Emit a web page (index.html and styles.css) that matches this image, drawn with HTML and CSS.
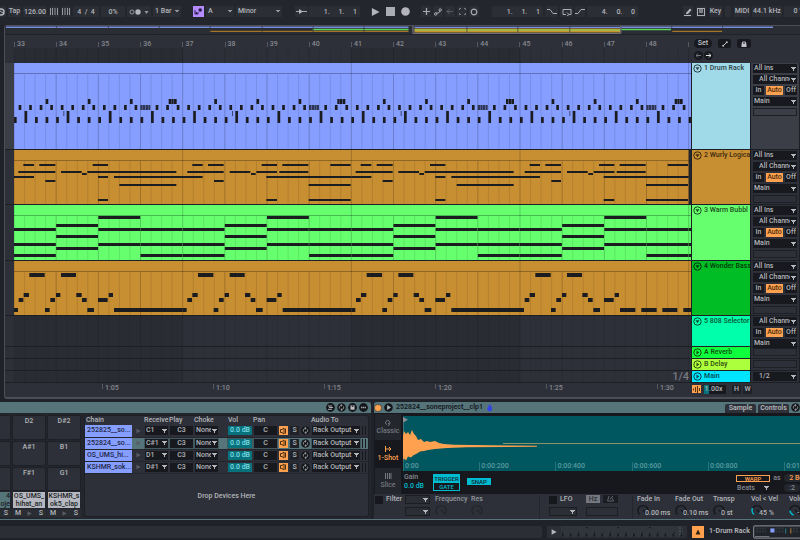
FILE: index.html
```html
<!DOCTYPE html>
<html lang="en">
<head>
<meta charset="utf-8">
<title>Arrangement</title>
<link rel="stylesheet" href="styles.css">
</head>
<body>
<svg class="defs" aria-hidden="true">
  <symbol id="fold" viewBox="0 0 9 9"><circle cx="4.500" cy="4.500" r="3.700" fill="none" stroke="currentColor"/><path d="M2.500 3.300h4L4.500 6.300z" fill="currentColor"/></symbol>
  <symbol id="unfold" viewBox="0 0 9 9"><circle cx="4.500" cy="4.500" r="3.700" fill="none" stroke="currentColor"/><path d="M3.500 2.500v4L6.300 4.500z" fill="currentColor"/></symbol>
  <symbol id="play" viewBox="0 0 10 10"><path d="M1 0.500v9L9.500 5z" fill="currentColor"/></symbol>
  <symbol id="swap" viewBox="0 0 9 9"><circle cx="4.500" cy="4.500" r="4.300" fill="#14161a"/><path d="M2.500 5.500C1.900 3.800 3 2.300 4.700 2.300M6.500 3.500C7.100 5.200 6 6.700 4.300 6.700M3.800 1.200l1.400 1.100-1.200 1M5.200 7.800L3.800 6.700l1.200-1" fill="none" stroke="#a9acb3" stroke-width=".9"/></symbol>
  <symbol id="knob" viewBox="0 0 12 12"><path d="M2.500 10.200a5 5 0 1 1 7 0M6 6l3.500 3.500" fill="none" stroke="currentColor" stroke-width="1.400"/></symbol>
  <symbol id="speaker" viewBox="0 0 9 8"><path d="M1.500 2.500h1.500l2-1.500v6L3 5.500H1.500z" fill="none" stroke="#4d2e0c"/><path d="M6.500 1.500v5" stroke="#4d2e0c"/></symbol>
</svg>

<header class="toolbar">
  <button class="cell w-link" aria-label="Link"><svg width="6" height="8" viewBox="0 0 6 8"><circle cx="1" cy="4" r="3" fill="none" stroke="#b3b5ba" stroke-width="1.500"/><path d="M0 3l3 2" stroke="#b3b5ba"/></svg></button>
  <button class="cell w-14">Tap</button>
  <input class="cell w-24" aria-label="Tempo" value="126.00">
  <button class="cell w-10" aria-label="Nudge down"><svg width="8" height="7"><path d="M.5 0v7M2.500 0v7M5 0v7M7.500 0v7" stroke="#93969d"/></svg></button>
  <button class="cell w-10" aria-label="Nudge up"><svg width="8" height="7"><path d="M.5 0v7M3 0v7M5.500 0v7M7.500 0v7" stroke="#93969d"/></svg></button>
  <input class="cell w-26" aria-label="Time signature" value="4  /  4">
  <input class="cell w-24" aria-label="Groove" value="0%">
  <button class="cell w-24" aria-label="Metronome"><svg width="20" height="8"><circle cx="3" cy="4" r="2" fill="none" stroke="#93969d"/><circle cx="9" cy="4" r="2.700" fill="#b3b5ba"/><path d="M15.500 3h4l-2 3z" fill="#93969d"/></svg></button>
  <select class="cell w-28 pick" aria-label="Quantization"><option>1 Bar</option></select>
  <button class="cell w-11 scale" aria-label="Scale"><svg width="9" height="9"><path d="M1 3v4h1.500V5M4 5v2H2.500" stroke="#2b1b4b" fill="none"/><circle cx="6.200" cy="3" r="1.800" fill="#2b1b4b"/></svg></button>
  <select class="cell w-28 pick" aria-label="Root"><option>A</option></select>
  <select class="cell w-46 pick" aria-label="Scale name"><option>Minor</option></select>
  <button class="cell w-14 follow" aria-label="Follow"><svg width="11" height="7"><path d="M0 3.500h11" stroke="#a3a5ab"/><path d="M3 1v5l4-2.500z" fill="#b3b5ba"/></svg></button>
  <input class="cell w-52 position" aria-label="Position" value="1.     1.     1">
  <button class="bare play" aria-label="Play"><svg width="9" height="10"><use href="#play"/></svg></button>
  <button class="bare" aria-label="Stop"><svg width="9" height="9"><rect width="9" height="9" fill="#a9acb3"/></svg></button>
  <button class="bare" aria-label="Record"><svg width="9" height="9"><circle cx="4.500" cy="4.500" r="4.300" fill="#b3b5ba"/></svg></button>
  <button class="cell w-11 overdub" aria-label="Overdub"><svg width="7" height="7"><path d="M3.500 0v7M0 3.500h7" stroke="#a9acb3" stroke-width="1.200"/></svg></button>
  <button class="cell w-11" aria-label="Automation arm"><svg width="8" height="8"><circle cx="1.700" cy="6" r="1.200" fill="none" stroke="#a9acb3"/><circle cx="6.200" cy="2" r="1.200" fill="none" stroke="#a9acb3"/><path d="M2 5h2.500L6 3" fill="none" stroke="#a9acb3"/></svg></button>
  <button class="cell w-11" aria-label="Re-enable automation"><svg width="8" height="7"><path d="M1 3.500h6M3.500 1L1 3.500 3.500 6" fill="none" stroke="#595c64"/></svg></button>
  <button class="cell w-11" aria-label="Capture"><svg width="7" height="7"><path d="M.5 2V.5H2M5 .5h1.500V2M6.500 5v1.500H5M2 6.500H.5V5" fill="none" stroke="#777a81"/></svg></button>
  <button class="cell w-11" aria-label="Session record"><svg width="8" height="8"><circle cx="4" cy="4" r="2.800" fill="none" stroke="#a9acb3" stroke-width="1.200"/></svg></button>
  <input class="cell w-52 loop-start" aria-label="Loop start" value="1.     1.     1">
  <button class="cell w-14" aria-label="Punch in"><svg width="10" height="7"><path d="M0 1.500h3l3 4h4" fill="none" stroke="#a9acb3"/></svg></button>
  <button class="cell w-14" aria-label="Loop"><svg width="10" height="8"><path d="M4 6.500H1v-5h8v5H7M5 4.500l2 2-2 1.500" fill="none" stroke="#a9acb3"/></svg></button>
  <button class="cell w-11" aria-label="Punch out"><svg width="10" height="7"><path d="M0 5.500h3l3-4h4" fill="none" stroke="#a9acb3"/></svg></button>
  <input class="cell w-52" aria-label="Loop length" value="4.     0.     0">
  <button class="cell w-11 draw" aria-label="Draw mode"><svg width="9" height="9"><path d="M2 6l4-4.500 1.500 1.500L4 7H2z" fill="#b3b5ba"/><path d="M0 8.500h7" stroke="#b3b5ba"/></svg></button>
  <button class="cell w-11" aria-label="Computer keyboard"><svg width="8" height="8"><rect x=".5" y=".5" width="7" height="7" fill="none" stroke="#a9acb3"/><path d="M3 0v5M5 0v5" stroke="#a9acb3" stroke-width="1.300"/></svg></button>
  <button class="cell w-14">Key</button>
  <span class="cell w-6"></span>
  <button class="cell w-17">MIDI</button>
  <button class="cell w-30">44.1 kHz</button>
  <span class="cell load">0 %</span>
</header>

<main class="arrangement">
  <svg class="overview" viewBox="0 0 796 9" preserveAspectRatio="none">
    <path d="M1 1.500h403M617 1.500h152" stroke="#768cdd" stroke-width="1.600"/>
    <path d="M205 6h199M668 6h50" stroke="#a47427" stroke-width="1.500"/>
    <path d="M308 4h96M617 4h50" stroke="#5bd65a" stroke-width="1.600"/>
    <path d="M410 1.500h206" stroke="#768cdd" stroke-width="1.500"/>
    <path d="M410 5h206" stroke="#c79135" stroke-width="4.600"/>
    <path d="M410 4.500h206" stroke="#7adf4c" stroke-width="1.200"/>
    <path d="M51.500 0v7M103.500 0v7M154.500 0v7M205.500 0v7M257.500 0v7M308.500 0v7M359.500 0v7M462.500 0v7M513.500 0v7M565.500 0v7M667.500 0v7M718.500 0v7" stroke="#2d3038" stroke-width=".7"/>
    <path d="M408.500 0v7q0 1.500 1.500 1.500h205q1.500 0 1.500-1.500V0" fill="none" stroke="#6d7078" stroke-width="1.300"/>
  </svg>

  <div class="ruler">
    <div class="bars">
      <span>33</span><span>34</span><span>35</span><span>36</span><span>37</span><span>38</span><span>39</span><span>40</span><span>41</span><span>42</span><span>43</span><span>44</span><span>45</span><span>46</span><span>47</span><span>48</span><span></span>
      <svg class="grid" data-lane="ruler"></svg>
    </div>
    <div class="locators">
      <button class="pill set">Set</button>
      <button class="pill" aria-label="Automation mode"><svg width="6" height="6"><path d="M1 5l4-4" stroke="#c0c2c7"/><circle cx="1.200" cy="4.800" r="1" fill="#c0c2c7"/><circle cx="4.800" cy="1.200" r="1" fill="#c0c2c7"/></svg></button>
      <button class="pill" aria-label="Lock envelopes"><svg width="6" height="6"><rect x=".5" y="2.500" width="5" height="3.500" fill="#c0c2c7"/><path d="M1.500 3V1h3v2" fill="none" stroke="#c0c2c7"/></svg></button>
      <span class="jump">
        <button class="pill dot" aria-label="Previous locator"><svg width="5" height="5"><path d="M0 2.500h5M2 .5l-2 2 2 2" fill="none" stroke="#74777e"/></svg></button>
        <button class="pill dot" aria-label="Next locator"><svg width="5" height="5"><path d="M0 2.500h5M3 .5l2 2-2 2" fill="none" stroke="#e0e1e4"/></svg></button>
      </span>
    </div>
  </div>

  <section class="track t-drum">
    <svg class="lane" data-lane="drum"></svg>
    <div class="name"><svg width="9" height="9"><use href="#fold"/></svg>1 Drum Rack</div>
    <div class="io selected">
      <select class="pick" aria-label="Input"><option>All Ins</option></select>
      <select class="pick channel" aria-label="Channel"><option>All Channels</option></select>
      <div class="monitor"><button>In</button><button class="on">Auto</button><button>Off</button></div>
      <select class="pick" aria-label="Output"><option>Main</option></select>
      <span class="blank"></span>
    </div>
  </section>
  <section class="track t-wurly">
    <svg class="lane" data-lane="wurly"></svg>
    <div class="name"><svg width="9" height="9"><use href="#fold"/></svg>2 Wurly Logica</div>
    <div class="io">
      <select class="pick" aria-label="Input"><option>All Ins</option></select>
      <select class="pick channel" aria-label="Channel"><option>All Channels</option></select>
      <div class="monitor"><button>In</button><button class="on">Auto</button><button>Off</button></div>
      <select class="pick" aria-label="Output"><option>Main</option></select>
      <span class="blank"></span>
    </div>
  </section>
  <section class="track t-warm">
    <svg class="lane" data-lane="warm"></svg>
    <div class="name"><svg width="9" height="9"><use href="#fold"/></svg>3 Warm Bubbl</div>
    <div class="io">
      <select class="pick" aria-label="Input"><option>All Ins</option></select>
      <select class="pick channel" aria-label="Channel"><option>All Channels</option></select>
      <div class="monitor"><button>In</button><button class="on">Auto</button><button>Off</button></div>
      <select class="pick" aria-label="Output"><option>Main</option></select>
      <span class="blank"></span>
    </div>
  </section>
  <section class="track t-bass">
    <svg class="lane" data-lane="bass"></svg>
    <div class="name"><svg width="9" height="9"><use href="#fold"/></svg>4 Wonder Bass</div>
    <div class="io">
      <select class="pick" aria-label="Input"><option>All Ins</option></select>
      <select class="pick channel" aria-label="Channel"><option>All Channels</option></select>
      <div class="monitor"><button>In</button><button class="on">Auto</button><button>Off</button></div>
      <select class="pick" aria-label="Output"><option>Main</option></select>
      <span class="blank"></span>
    </div>
  </section>
  <section class="track t-selector">
    <svg class="lane" data-lane="empty"></svg>
    <div class="name"><svg width="9" height="9"><use href="#fold"/></svg>5 808 Selector</div>
    <div class="io">
      <select class="pick channel" aria-label="Channel"><option>All Channels</option></select>
      <div class="monitor"><button>In</button><button class="on">Auto</button><button>Off</button></div>
      <select class="pick" aria-label="Output"><option>Main</option></select>
    </div>
  </section>
  <section class="track t-reverb">
    <svg class="lane" data-lane="empty"></svg>
    <div class="name"><svg width="9" height="9"><use href="#unfold"/></svg>A Reverb</div>
    <div class="io"><span class="blank"></span></div>
  </section>
  <section class="track t-delay">
    <svg class="lane" data-lane="empty"></svg>
    <div class="name"><svg width="9" height="9"><use href="#unfold"/></svg>B Delay</div>
    <div class="io"><span class="blank"></span></div>
  </section>
  <section class="track t-main">
    <div class="lane-wrap"><svg class="lane" data-lane="empty"></svg><span class="snap-size">1/4</span></div>
    <div class="name"><svg width="9" height="9"><use href="#unfold"/></svg>Main</div>
    <div class="io"><select class="pick channel" aria-label="Cue output"><option>1/2</option></select></div>
  </section>

  <div class="times">
    <div class="clock"><span></span><span>1:05</span><span>1:10</span><span>1:15</span><span>1:20</span><span>1:25</span><span>1:30</span></div>
    <div class="zoomer">
      <button class="wave-btn" aria-label="Waveform zoom"><svg width="8" height="7"><path d="M.5 2.500v2M2.500 1v5M4.500 0v7M6.500 2v3" stroke="#5c3309"/></svg></button>
      <span class="rate"><b>1</b>.00x</span>
      <button class="small">H</button><button class="small">W</button>
    </div>
  </div>
</main>

<div class="devices">
  <section class="rack">
    <div class="titlebar rack-title">
      <svg width="9" height="9"><circle cx="4.500" cy="4.500" r="4.400" fill="#14161a"/><path d="M2 3h4M3 4.500h4M2 6.300h4" stroke="#a9acb3"/></svg>
      <svg width="9" height="9"><use href="#swap"/></svg>
      <svg width="9" height="9"><circle cx="4.500" cy="4.500" r="4.400" fill="#14161a"/><path d="M2.500 2.300h4v4.400h-4z" fill="#c0c2c7"/><path d="M3.700 2.500h1.700v1.300H3.700z" fill="#14161a"/></svg>
      <svg width="9" height="9"><circle cx="4.500" cy="4.500" r="4.400" fill="#14161a"/><path d="M2 4.500h5" stroke="#a9acb3" stroke-width="1.300" stroke-dasharray="1.300 .5"/></svg>
    </div>
    <div class="rack-body">
      <div class="pads">
        <button class="pad edge" aria-label="Pad"></button><button class="pad">D2</button><button class="pad">D#2</button>
        <button class="pad edge" aria-label="Pad"></button><button class="pad">A#1</button><button class="pad">B1</button>
        <button class="pad edge" aria-label="Pad"></button><button class="pad">F#1</button><button class="pad">G1</button>
        <div class="pad-name current"><span>4</span><span>oje</span></div><div class="pad-name"><span>OS_UMS_</span><span>hihat_an</span></div><div class="pad-name"><span>KSHMR_s</span><span>ok5_clap</span></div>
        <div class="ms last"><button>S</button></div>
        <div class="ms"><button>M</button><svg width="5" height="5"><use href="#play"/></svg><button>S</button></div>
        <div class="ms"><button>M</button><svg width="5" height="5"><use href="#play"/></svg><button>S</button></div>
      </div>
      <div class="chain-box">
        <table class="chains">
          <colgroup><col class="c-name"><col class="c-aud"><col class="c-key"><col class="c-key"><col class="c-choke"><col class="c-vol"><col class="c-key"><col class="c-icon"><col class="c-icon"><col class="c-icon"><col class="c-out"><col></colgroup>
          <thead><tr><th>Chain</th><th></th><th>Receive</th><th>Play</th><th>Choke</th><th class="vol-head">Vol</th><th>Pan</th><th></th><th></th><th></th><th>Audio To</th><th></th></tr></thead>
          <tbody>
            <tr><td class="chain">252825__so...</td><td><svg width="5" height="6"><use href="#play"/></svg></td><td><select class="pick" aria-label="Receive"><option>C1</option></select></td><td><input aria-label="Play" value="C3"></td><td><select class="pick" aria-label="Choke"><option>None</option></select></td><td class="vol"><input aria-label="Volume" value="0.0 dB"></td><td><input aria-label="Pan" value="C"></td><td><button class="act" aria-label="Activator"><svg width="9" height="8"><use href="#speaker"/></svg></button></td><td><button class="solo">S</button></td><td><svg width="9" height="9"><use href="#swap"/></svg></td><td><select class="pick" aria-label="Audio to"><option>Rack Output</option></select></td><td><span class="meter"></span></td></tr>
            <tr class="picked"><td class="chain">252824__so...</td><td><svg width="5" height="6"><use href="#play"/></svg></td><td><select class="pick" aria-label="Receive"><option>C#1</option></select></td><td><input aria-label="Play" value="C3"></td><td><select class="pick" aria-label="Choke"><option>None</option></select></td><td class="vol"><input aria-label="Volume" value="0.0 dB"></td><td><input aria-label="Pan" value="C"></td><td><button class="act" aria-label="Activator"><svg width="9" height="8"><use href="#speaker"/></svg></button></td><td><button class="solo">S</button></td><td><svg width="9" height="9"><use href="#swap"/></svg></td><td><select class="pick" aria-label="Audio to"><option>Rack Output</option></select></td><td><span class="meter"></span></td></tr>
            <tr><td class="chain">OS_UMS_hi...</td><td><svg width="5" height="6"><use href="#play"/></svg></td><td><select class="pick" aria-label="Receive"><option>D1</option></select></td><td><input aria-label="Play" value="C3"></td><td><select class="pick" aria-label="Choke"><option>None</option></select></td><td class="vol"><input aria-label="Volume" value="0.0 dB"></td><td><input aria-label="Pan" value="C"></td><td><button class="act" aria-label="Activator"><svg width="9" height="8"><use href="#speaker"/></svg></button></td><td><button class="solo">S</button></td><td><svg width="9" height="9"><use href="#swap"/></svg></td><td><select class="pick" aria-label="Audio to"><option>Rack Output</option></select></td><td><span class="meter"></span></td></tr>
            <tr><td class="chain">KSHMR_sok...</td><td><svg width="5" height="6"><use href="#play"/></svg></td><td><select class="pick" aria-label="Receive"><option>D#1</option></select></td><td><input aria-label="Play" value="C3"></td><td><select class="pick" aria-label="Choke"><option>None</option></select></td><td class="vol"><input aria-label="Volume" value="0.0 dB"></td><td><input aria-label="Pan" value="C"></td><td><button class="act" aria-label="Activator"><svg width="9" height="8"><use href="#speaker"/></svg></button></td><td><button class="solo">S</button></td><td><svg width="9" height="9"><use href="#swap"/></svg></td><td><select class="pick" aria-label="Audio to"><option>Rack Output</option></select></td><td><span class="meter"></span></td></tr>
          </tbody>
        </table>
        <p class="drop">Drop Devices Here</p>
      </div>
    </div>
  </section>

  <section class="sampler">
    <div class="titlebar sampler-title">
      <svg width="8" height="8"><circle cx="4" cy="4" r="3.600" fill="#ffa14f" stroke="#30333a" stroke-width=".6"/></svg>
      <svg width="9" height="9"><circle cx="4.500" cy="4.500" r="4.300" fill="#14161a"/><path d="M3.200 2v5l3.800-2.500z" fill="#a9bdc0"/></svg>
      <h2>252824__soneproject__clp1</h2>
      <svg width="7" height="8"><path d="M1 3.500L2.300 4V1h1v2.500L3.800.5h1v3L6 2v3.500Q5.500 7.500 3.500 7.500 1.500 7 1 3.500z" fill="#3440e8"/></svg>
      <span class="grow"></span>
      <button class="tab">Sample</button><button class="tab">Controls</button>
      <svg width="9" height="9"><use href="#swap"/></svg>
    </div>
    <div class="sampler-body">
      <div class="modes">
        <button><svg width="8" height="8"><path d="M3 6.500H2.500a2.200 2.200 0 1 1 2.500 0M4 5l1.500 1.500L4 8" fill="none" stroke="currentColor"/></svg>Classic</button>
        <button class="on"><svg width="8" height="8"><path d="M1.500 1v6M2 4h5M5 2l2 2-2 2" fill="none" stroke="currentColor"/></svg>1-Shot</button>
        <button><svg width="8" height="8"><path d="M1.500 1v6M3.500 1v6M5.500 1v6M7 1v6" stroke="currentColor"/></svg>Slice</button>
      </div>
      <div class="sample">
        <div class="display">
          <svg class="wave" viewBox="0 0 397 46" preserveAspectRatio="none">
            <path d="M100 27.500h297" stroke="#8c9168"/>
            <path d="M0 1v45" stroke="#738f94"/><path d="M0 1l5 2.700L0 6.500z" fill="#8a8d96"/>
            <path d="M1 15l2 3 2-2 2 3 2-5 2 4 2 2 2 4 3-1 3 3 3-1 3 1 5-1 4 2 5 1 10 .7 20 .3 40 .5 23 .2v1l-30 .3-40 .3-20 .7-12 1-7 1-4 1-4 .6-3 2-4 2-2 2-3-1-2 4-2-2-3 3-3-2-2 7z" fill="#ffa14f"/>
          </svg>
          <div class="sample-ruler"><span>0:00</span><span>0:00:200</span><span>0:00:400</span><span>0:00:600</span><span>0:00:800</span><span>0:01</span></div>
        </div>
        <div class="playback">
          <label class="gain">Gain<input value="0.0 dB"></label>
          <div class="trig"><button class="on">TRIGGER</button><button>GATE</button></div>
          <button class="snap">SNAP</button>
          <span class="grow"></span>
          <div class="warp">
            <div><button class="warp-btn">WARP</button><span class="as">as</span><button class="beats">2 Beats</button></div>
            <div><select class="pick warp-mode" aria-label="Warp mode"><option>Beats</option></select><button class="half">:2</button></div>
          </div>
        </div>
      </div>
    </div>
    <div class="params">
      <label class="check filter-on"><input type="checkbox">Filter</label>
      <div class="filter"><select class="pick" aria-label="Filter type"></select><select class="pick" aria-label="Filter slope"></select></div>
      <div class="param dim freq"><span>Frequency</span><svg width="12" height="12"><use href="#knob"/></svg></div>
      <div class="param dim res"><span>Res</span><svg width="12" height="12"><use href="#knob"/></svg></div>
      <div class="lfo">
        <label class="check"><input type="checkbox">LFO</label><button class="hz">Hz</button><button class="sync" aria-label="Sync"><svg width="7" height="7"><path d="M2 1L.5 6h6L5 3M3 4l3-3" fill="none" stroke="#61646b"/></svg></button>
        <select class="pick" aria-label="LFO shape"></select><span class="blank"></span>
      </div>
      <div class="param"><span>Fade In</span><div><svg width="12" height="12"><use href="#knob"/></svg><output>0.00 ms</output></div></div>
      <div class="param"><span>Fade Out</span><div><svg width="12" height="12"><use href="#knob"/></svg><output>0.10 ms</output></div></div>
      <div class="param"><span>Transp</span><div><svg width="12" height="12"><use href="#knob"/></svg><output>0 st</output></div></div>
      <div class="param"><span>Vol &lt; Vel</span><div><svg width="12" height="12"><use href="#knob"/><path d="M1.500 4Q0 8 3 10.500" fill="none" stroke="#00bcd0" stroke-width="1.500"/></svg><output>45 %</output></div></div>
      <div class="param"><span>Volume</span><div><svg width="12" height="12"><use href="#knob"/><path d="M1 6.500Q1 9.500 4.500 11" fill="none" stroke="#00bcd0" stroke-width="1.500"/></svg><output>-12 dB</output></div></div>
    </div>
  </section>
</div>

<footer class="status">
  <div class="info"></div>
  <div class="mini"><svg width="6" height="6"><use href="#play"/></svg>
    <svg class="mini-clip" viewBox="0 0 122 11" preserveAspectRatio="none"><path d="M1 9h120" stroke="#15171b" stroke-width="3" stroke-dasharray="1.500 6.400"/><path d="M1 6.500h120" stroke="#15171b" stroke-dasharray="1 15"/><path d="M25 1.500h90" stroke="#15171b" stroke-dasharray="1.500 30"/><path d="M119 1v9" stroke="#4a5a60" stroke-dasharray="2 1"/></svg>
  </div>
  <button class="detail" aria-label="Device view"><svg width="8" height="8"><path d="M4 1.500l2.500 5h-5z" fill="#30200c"/></svg></button>
  <span class="current-track">1-Drum Rack</span>
  <svg class="device-map" viewBox="0 0 46 13"><path d="M48 .6H2Q.6.6.6 2v9Q.6 12.400 2 12.400h46" fill="#20232a" stroke="#7b7e85" stroke-width="1.200"/><path d="M3 3h10M3 6h10M22 3h8M22 6h8M36 3h8M36 6h8" stroke="#30383f" stroke-width="2" stroke-dasharray="2 1"/><rect x="17" y="3" width="4" height="4" fill="#859eff"/><path d="M2 11h14" stroke="#7b7e85"/><path d="M32 3v5" stroke="#2a7f87"/><path d="M37 3v5" stroke="#a47427"/></svg>
</footer>
<script src="lanes.js"></script>
</body>
</html>
```
FILE: styles.css
```css
* { box-sizing: border-box; }
body {
  margin: 0;
  min-height: 100vh;
  overflow: hidden;
  background: #1f2228;
  color: #b3b5ba;
  font: 500 7px/9px Roboto, "Liberation Sans", sans-serif;
  white-space: nowrap;
}
button, input, select {
  appearance: none;
  margin: 0;
  padding: 0;
  border: 0;
  border-radius: 0;
  min-width: 0;
  background: none;
  color: inherit;
  font: inherit;
  line-height: 9px;
}
svg { flex: none; display: block; }
.defs { width: 0; height: 0; position: absolute; }
.grow { flex: 1; }
.pick {
  display: block;
  width: 100%;
  height: 9px;
  padding: 0 7px 0 1px;
  overflow: hidden;
  background: #17191e conic-gradient(from -32deg at 50% 100%, #b3b5ba 64deg, transparent 0) no-repeat right 1px center / 5px 4px;
}
.blank { display: block; height: 8px; border: 1px solid #1c1f24; }

/* transport */
.toolbar { display: flex; align-items: center; gap: 2px; height: 25px; padding-bottom: 2px; background: #23262d; overflow: hidden; }
.cell { flex: none; display: flex; align-items: center; justify-content: center; height: 11px; background: #2b2e35; text-align: center; white-space: pre; }
.cell.pick { padding-left: 2px; text-align: left; line-height: 11px; background: #2b2e35 conic-gradient(from -32deg at 50% 100%, #93969d 64deg, transparent 0) no-repeat right 2px center / 4px 3px; }
.w-link { width: 6px; justify-content: flex-start; }
.w-6 { width: 6px; }
.w-10 { width: 10px; }
.w-11 { width: 10px; }
.w-14 { width: 13px; }
.w-17 { width: 16px; }
.w-24 { width: 24px; }
.w-26 { width: 26px; }
.w-28 { width: 28px; }
.w-30 { width: 30px; }
.load { width: 26px; padding-left: 4px; }
.w-46 { width: 46px; }
.w-52 { width: 51px; padding-right: 3px; text-align: right; }
.scale { width: 11px; margin-left: 10px; background: #b48cff; }
.follow { margin-left: 11px; }
.position { margin-left: -1px; }
.bare { flex: none; color: #b3b5ba; margin-right: 4px; }
.play { margin-left: 9px; }
.overdub { margin-left: 5px; }
.loop-start { margin-left: 11px; }
.draw { margin-left: 43px; }
.draw ~ .cell { margin-left: 1px; }
.draw ~ .w-30, .draw ~ .load { margin-left: 0; }

/* arrangement */
.arrangement { margin-left: 4px; padding-bottom: 2px; border: solid #4b4e56; border-width: 1px 0 2px 1px; border-radius: 3px 0 0 3px; background: #2d3038; }
.overview { width: 100%; height: 9px; background: #2a2d34; border-bottom: 1px solid #1f2228; }
.ruler { display: flex; height: 28px; }
.bars { position: relative; flex: 1; display: grid; grid-template-columns: repeat(16, 42fr) 3fr; grid-template-rows: 13px 15px; margin-left: 9px; color: #85888f; }
.bars span { margin-top: 7px; height: 5px; padding-left: 2px; border-left: 1px solid #55585f; line-height: 5px; }
.grid { grid-column: 1 / -1; width: 100%; height: 15px; }
.locators { width: 109px; display: grid; grid-template-columns: 18px 13px 14px; grid-template-rows: 9px 9px; column-gap: 6px; row-gap: 2px; padding: 4px 0 0 3px; }
.pill { display: flex; align-items: center; justify-content: center; height: 9px; border-radius: 2px; background: #17191e; color: #c0c2c7; }
.pill.set { border-radius: 5px; }
.jump { display: flex; gap: 1px; padding-top: 1px; }
.dot { width: 9px; border-radius: 5px; flex: none; }
.track { display: flex; border-bottom: 1px solid #1c1f24; }
.lane, .lane-wrap { flex: 1; min-width: 0; height: 100%; }
.track > .lane, .lane-wrap { height: auto; align-self: stretch; margin-left: 9px; }
.lane-wrap { position: relative; display: flex; align-items: center; justify-content: flex-end; }
.lane-wrap .lane { position: absolute; inset: 0; width: 100%; }
.snap-size { position: relative; padding-right: 2px; color: #777a81; font-size: 11px; line-height: 11px; }
.name { width: 59px; display: flex; align-items: flex-start; gap: 2px; padding: 1px 0 0 1px; border-left: 1px solid #1c1f24; overflow: hidden; color: rgb(0 0 0 / 70%); font-weight: 600; }
.io { width: 50px; display: flex; flex-direction: column; gap: 2px; padding: 1px 2px 0 2px; border-left: 1px solid #17191e; border-right: 1px solid #1c1f24; }
.io.selected { background: #3b3e46; }
.channel { padding-left: 6px; }
.monitor { display: grid; grid-template-columns: 11px 17px 12px; gap: 2px; }
.monitor button { background: #17191e; }
.monitor .on { background: #ffa14f; color: #4d2e0c; }
.t-drum { height: 87px; background: #3b3e46; }
.t-wurly, .t-warm, .t-bass { height: 55px; }
.t-warm { height: 56px; }
.t-selector { height: 31px; }
.t-reverb, .t-delay, .t-main { height: 12px; }
.t-drum .name { background: #a0d9e8; }
.t-wurly .name { background: #c88e32; }
.t-warm .name { background: #66ff6e; }
.t-bass .name { background: #00bd25; }
.t-selector .name { background: #00ffab; }
.t-reverb .name { background: #10ff3c; }
.t-delay .name { background: #acff3c; }
.t-main .name { background: #00e5ff; }
.times { display: flex; height: 12px; }
.clock { flex: 1; display: grid; grid-template-columns: 88fr repeat(5, 111fr) 34fr; margin-left: 9px; color: #85888f; }
.clock span { height: 5px; margin-top: 1px; padding-left: 2px; border-left: 1px solid #55585f; line-height: 9px; }
.clock span:first-child { border: 0; }
.zoomer { width: 109px; display: flex; align-items: flex-start; gap: 2px; padding: 2px 0 0 1px; }
.wave-btn { display: flex; align-items: center; justify-content: center; width: 9px; height: 8px; background: #ffa14f; }
.rate { width: 22px; margin: 0 4px 0 1px; background: #17191e; }
.rate b { display: inline-block; width: 5px; background: #08727c; font-weight: 500; text-align: center; }
.small { width: 9px; background: #1f2228; }

/* devices */
.devices { display: flex; margin-top: 3px; height: 118px; border-bottom: 1px solid #56757a; }
.titlebar { display: flex; align-items: center; height: 11px; background: #56757a; color: #14161a; }
.rack { flex: none; width: 371px; background: #2d3038; display: flex; flex-direction: column; }
.rack-title { justify-content: flex-end; gap: 2px; padding-right: 3px; border-radius: 0 3px 0 0; }
.rack-body { display: flex; flex: 1; padding: 2px 3px 2px 0; background: #23262d; }
.pads { width: 81px; display: grid; grid-template-columns: 11px 34px 34px; grid-template-rows: 25px 25px 24px 16px 8px; gap: 1px; }
.pad { display: flex; justify-content: center; padding-top: 1px; border: 1px solid #1d2026; border-radius: 2px; background: #2d3038; }
.pad.edge { border-left: 0; border-radius: 0 2px 2px 0; }
.pad-name { display: flex; flex-direction: column; align-items: center; margin: 0 1px; background: #b5b8c0; color: #1c1f24; line-height: 8px; }
.pad-name.current { align-items: flex-end; margin-left: 0; background: #56757a; }
.ms { display: flex; align-items: center; justify-content: space-between; padding: 0 3px; background: #2a2d34; }
.ms.last { justify-content: flex-end; }
.ms svg { color: #595c64; }
.chain-box { flex: 1; margin-left: 3px; border: 1px solid #1d2026; border-radius: 3px; background: #2d3038; }
.chains { table-layout: fixed; width: 283px; border-collapse: collapse; }
.chains th { height: 9px; padding: 0; text-align: left; font-weight: 500; }
.chains th:first-child { padding-left: 1px; }
.chains th.vol-head { padding-left: 9px; }
.chains td { height: 12px; padding: 1px; vertical-align: middle; border-bottom: 1px solid #23262d; }
.chains td > svg { margin: 0 auto; color: #595c64; }
.chains .chain { padding: 0 2px; background: #859eff; color: #1f2645; }
.chains input { display: block; width: 100%; height: 9px; background: #17191e; text-align: center; }
.chains .vol { padding-left: 9px; }
.chains .vol input { background: #08727c; color: #7fdde6; }
.chains .act, .solo { display: block; width: 9px; height: 9px; }
.chains .act { background: #ffa14f; }
.solo { background: #1f2228; }
.picked td { background: #56757a; }
.picked input, .picked .pick { outline: 1px solid #44595e; }
.c-name { width: 47px; }
.c-aud { width: 12px; }
.c-key { width: 25px; }
.c-choke { width: 25px; }
.c-vol { width: 34px; }
.c-icon { width: 11px; }
.c-out { width: 50px; }
.meter { display: block; width: 4px; height: 9px; border: solid #17191e; border-width: 0 1px; }
.drop { margin: 18px 0 0; text-align: center; }

.sampler { flex: 1; min-width: 0; margin-left: 3px; display: flex; flex-direction: column; background: #2d3038; overflow: hidden; }
.sampler-title { gap: 2px; border-radius: 3px 0 0 0; }
.sampler-title h2 { margin: 0 1px; font: inherit; font-weight: 600; }
.tab { flex: none; align-self: flex-end; width: 31px; height: 9px; border-radius: 2px 2px 0 0; background: #2d3038; color: #b3b5ba; font-weight: 600; }
.sampler-body { display: flex; height: 81px; padding: 1px 0 0 1px; background: #16181d; }
.modes { width: 26px; display: grid; grid-template-rows: repeat(3, 1fr); gap: 1px; }
.modes button { display: flex; flex-direction: column; align-items: center; justify-content: center; gap: 1px; background: #23262d; color: #74777e; }
.modes .on { background: #16181d; color: #ffa14f; }
.sample { flex: 1; min-width: 0; padding: 2px 0 0 2px; }
.display { height: 55px; background: #00575f; display: flex; flex-direction: column; }
.wave { width: 100%; height: 46px; }
.sample-ruler { display: grid; grid-template-columns: repeat(5, 76fr) 15fr; color: #5b999f; }
.sample-ruler span { padding-left: 1px; border-left: 1px solid #2a7479; }
.playback { display: flex; padding: 2px 0 0 1px; }
.gain { width: 29px; display: flex; flex-direction: column; color: #85888f; }
.gain input { width: 28px; color: #00bcd0; }
.trig { width: 27px; height: 17px; margin-top: 1px; display: grid; grid-template-rows: 1fr 1fr; border: 1px solid #00bcd0; }
.trig button, .snap { line-height: 7px; font-size: 6px; color: #00bcd0; font-weight: 500; }
.trig .on, .snap { background: #00bcd0; color: #0c2a30; }
.snap { width: 24px; height: 7px; margin: 5px 0 0 7px; }
.warp { width: 64px; overflow: hidden; }
.warp > div { display: flex; align-items: center; height: 10px; }
.warp-btn { flex: none; width: 34px; height: 7px; border: 1px solid #ffa14f; color: #ffa14f; font-size: 6px; line-height: 5px; }
.as { flex: none; width: 14px; text-align: center; color: #85888f; }
.beats, .half { flex: none; width: 34px; height: 8px; border-radius: 4px; background: #23262d; color: #ffa14f; line-height: 8px; }
.half { width: 16px; color: #85888f; }
.warp-mode { flex: none; width: 34px; margin-right: 14px; background-color: transparent; color: #85888f; }
.params { flex: 1; display: flex; padding: 1px 0 0 1px; }
.check { display: flex; height: 9px; gap: 3px; align-items: center; }
.check input { flex: none; width: 8px; height: 8px; background: #16181d; }
.params > * { flex: none; }
.params .pick { height: 9px; border: 1px solid #1a1d22; background-color: #2b2e35; }
.filter-on { width: 27px; }
.filter { width: 25px; margin-left: 3px; display: flex; flex-direction: column; gap: 3px; }
.param { width: 38px; }
.param div { display: flex; align-items: flex-end; color: #15171b; }
.param span { display: block; }
.param svg { overflow: visible; }
.param output { margin: 0 0 -2px -4px; color: #b3b5ba; }
.param.dim span { color: #93969d; }
.param.dim svg { color: #23262d; }
.param.freq { width: 36px; margin-left: 5px; }
.param.res { width: 69px; border-right: 1px solid #23262d; }
.lfo { display: grid; width: 93px; grid-template-columns: 34px 14px 15px; grid-template-rows: 9px 9px; column-gap: 3px; row-gap: 3px; padding-left: 9px; margin-right: 4px; border-right: 1px solid #23262d; }
.lfo .pick { width: 28px; }
.lfo .hz { height: 8px; background: #74777e; color: #2d3038; line-height: 8px; }
.lfo .sync { display: flex; justify-content: center; height: 8px; background: #1a1d22; }
.lfo .blank { grid-column: span 2; height: 9px; }

.status { display: flex; align-items: center; height: 17px; margin-top: 3px; }
.info { flex: 1; height: 12px; border-radius: 0 2px 2px 0; background: #2b2e35; }
.mini { display: flex; align-items: center; gap: 4px; width: 140px; height: 12px; margin-left: 5px; padding-left: 4px; background: #2b2e35; }
.mini-clip { width: 122px; height: 11px; background: #30343b; }
.detail { display: flex; align-items: center; justify-content: center; width: 12px; height: 12px; margin: 0 5px; background: #ffa14f; }
.current-track { width: 43px; font-weight: 600; }
.device-map { width: 47px; height: 14px; margin-left: 1px; }
```
FILE: lanes.js
```js
// Lane drawings. Horizontal unit: a third of a pixel at 677px lane width; a bar is 126.5 units.
const WIDTH = 2031;
const BAR = 126.5;
const BEAT = BAR / 4;
const INK = '#1b1c20';

const rect = (x, y, w, h, fill) =>
  `<rect x="${x}" y="${y}" width="${w}" height="${h}" fill="${fill}"/>`;

function gridLines(top, height, strength) {
  let out = '';
  for (let i = 0; i * BEAT < WIDTH; i++) {
    const major = i % 4 === 0;
    out += rect(i * BEAT - 1.5, i % 16 === 0 ? 0 : top, 3, height, `rgb(0 0 0 / ${(major ? 2 : 1) * strength}%)`);
  }
  return out;
}

function shading(height) {
  return rect(0, 0, BAR * 4, height, '#292c33') + rect(BAR * 8, 0, BAR * 4, height, '#292c33');
}

// rows: [y, height, [[start, end], ...], fill] repeated every `period` units
function notes(rows, period, limit = WIDTH) {
  let out = '';
  for (let base = 0; base < limit; base += period) {
    for (const [y, h, spans, fill = INK] of rows) {
      for (const [a, b] of spans) {
        if (base + a < limit) out += rect(base + a, y, Math.min(b, limit - base) - a, h, fill);
      }
    }
  }
  return out;
}

function clip(color, height, strength = 10) {
  return rect(0, 0, WIDTH, height, color) + rect(0, 10, WIDTH, 1, 'rgb(0 0 0 / 28%)') + gridLines(11, height, strength);
}

const bars = (...list) => list.map(n => [n * BAR, (n + 1) * BAR - 1]);
const beats = (list, width) => list.map(n => [n * BEAT, n * BEAT + width]);
const all = [...Array(16).keys()];

const drum = [
  [54, 6, beats(all, 8)],
  [42, 5, beats(all.filter(n => n !== 12).map(n => n + 0.44), 8)],
  [42, 5, [[379, 386], [387, 394], [395, 402], [403, 409]], '#2f3655'],
  [48, 6, beats([1, 5, 9, 13], 8)],
  [48, 5, [[148, 151]], '#3d466f'],
  [36, 5, beats([3, 7, 11], 8).concat([[464, 471], [472, 479], [480, 488]])]
];
const wurly = [
  [14, 2, [[28, 60], [76, 124], [236, 282], [535, 566], [582, 629], [743, 789], [805, 883], [949, 1010]]],
  [21, 2, [[13, 124], [141, 203], [220, 487], [520, 629], [647, 709], [727, 789], [796, 883]]],
  [23, 2, [[204, 218], [711, 725]]],
  [26, 2, [[0, 60], [252, 282], [300, 566], [757, 1012]]],
  [30, 2, [[94, 124], [600, 629]]],
  [34, 2, [[316, 487], [884, 1010]]],
  [49, 2, [[252, 282], [757, 789], [884, 1010]]]
];
const warm = [
  [11, 3, bars(2)],
  [19, 3, bars(1)],
  [23, 3, bars(0, 2, 3)],
  [30, 3, bars(1)],
  [38, 3, bars(0, 2, 3)],
  [42, 3, bars(1)],
  [49, 3, bars(0, 3)]
];
const bassHigh = [
  [12, 4, [[46, 92], [141, 186]]],
  [32, 4, [[29, 45], [126, 139], [187, 203], [284, 297]]],
  [37, 4, [[14, 28], [109, 123], [204, 218], [252, 281]]],
  [47, 4, [[0, 12], [93, 107], [220, 240]]]
];
const bassLong = [[47, 4, [[300, 506]]]];
const bassEnd = [[47, 4, [[1818, 1864], [1882, 1928], [1945, 1990], [2008, 2031]]]];

const draw = {
  ruler: () => [15, shading(15) + gridLines(0, 15, 7)],
  empty: () => [30, shading(30) + gridLines(0, 30, 5)],
  drum: () => [86, clip('#859eff', 86, 10) + notes(drum, BAR * 4)],
  wurly: () => [54, clip('#c88e32', 54) + notes(wurly, BAR * 8) + rect(2024, 0, 7, 54, '#23262d')],
  warm: () => [55, clip('#66ff6e', 55) + notes(warm, BAR * 4)],
  bass: () => [54, clip('#c88e32', 54) + notes(bassHigh, BAR * 4, 1820) + notes(bassLong, BAR * 4, BAR * 12) + notes(bassEnd, 5000)]
};

for (const svg of document.querySelectorAll('[data-lane]')) {
  const [height, shapes] = draw[svg.dataset.lane]();
  svg.setAttribute('viewBox', `0 0 ${WIDTH} ${height}`);
  svg.setAttribute('preserveAspectRatio', 'none');
  svg.innerHTML = shapes;
}
```
